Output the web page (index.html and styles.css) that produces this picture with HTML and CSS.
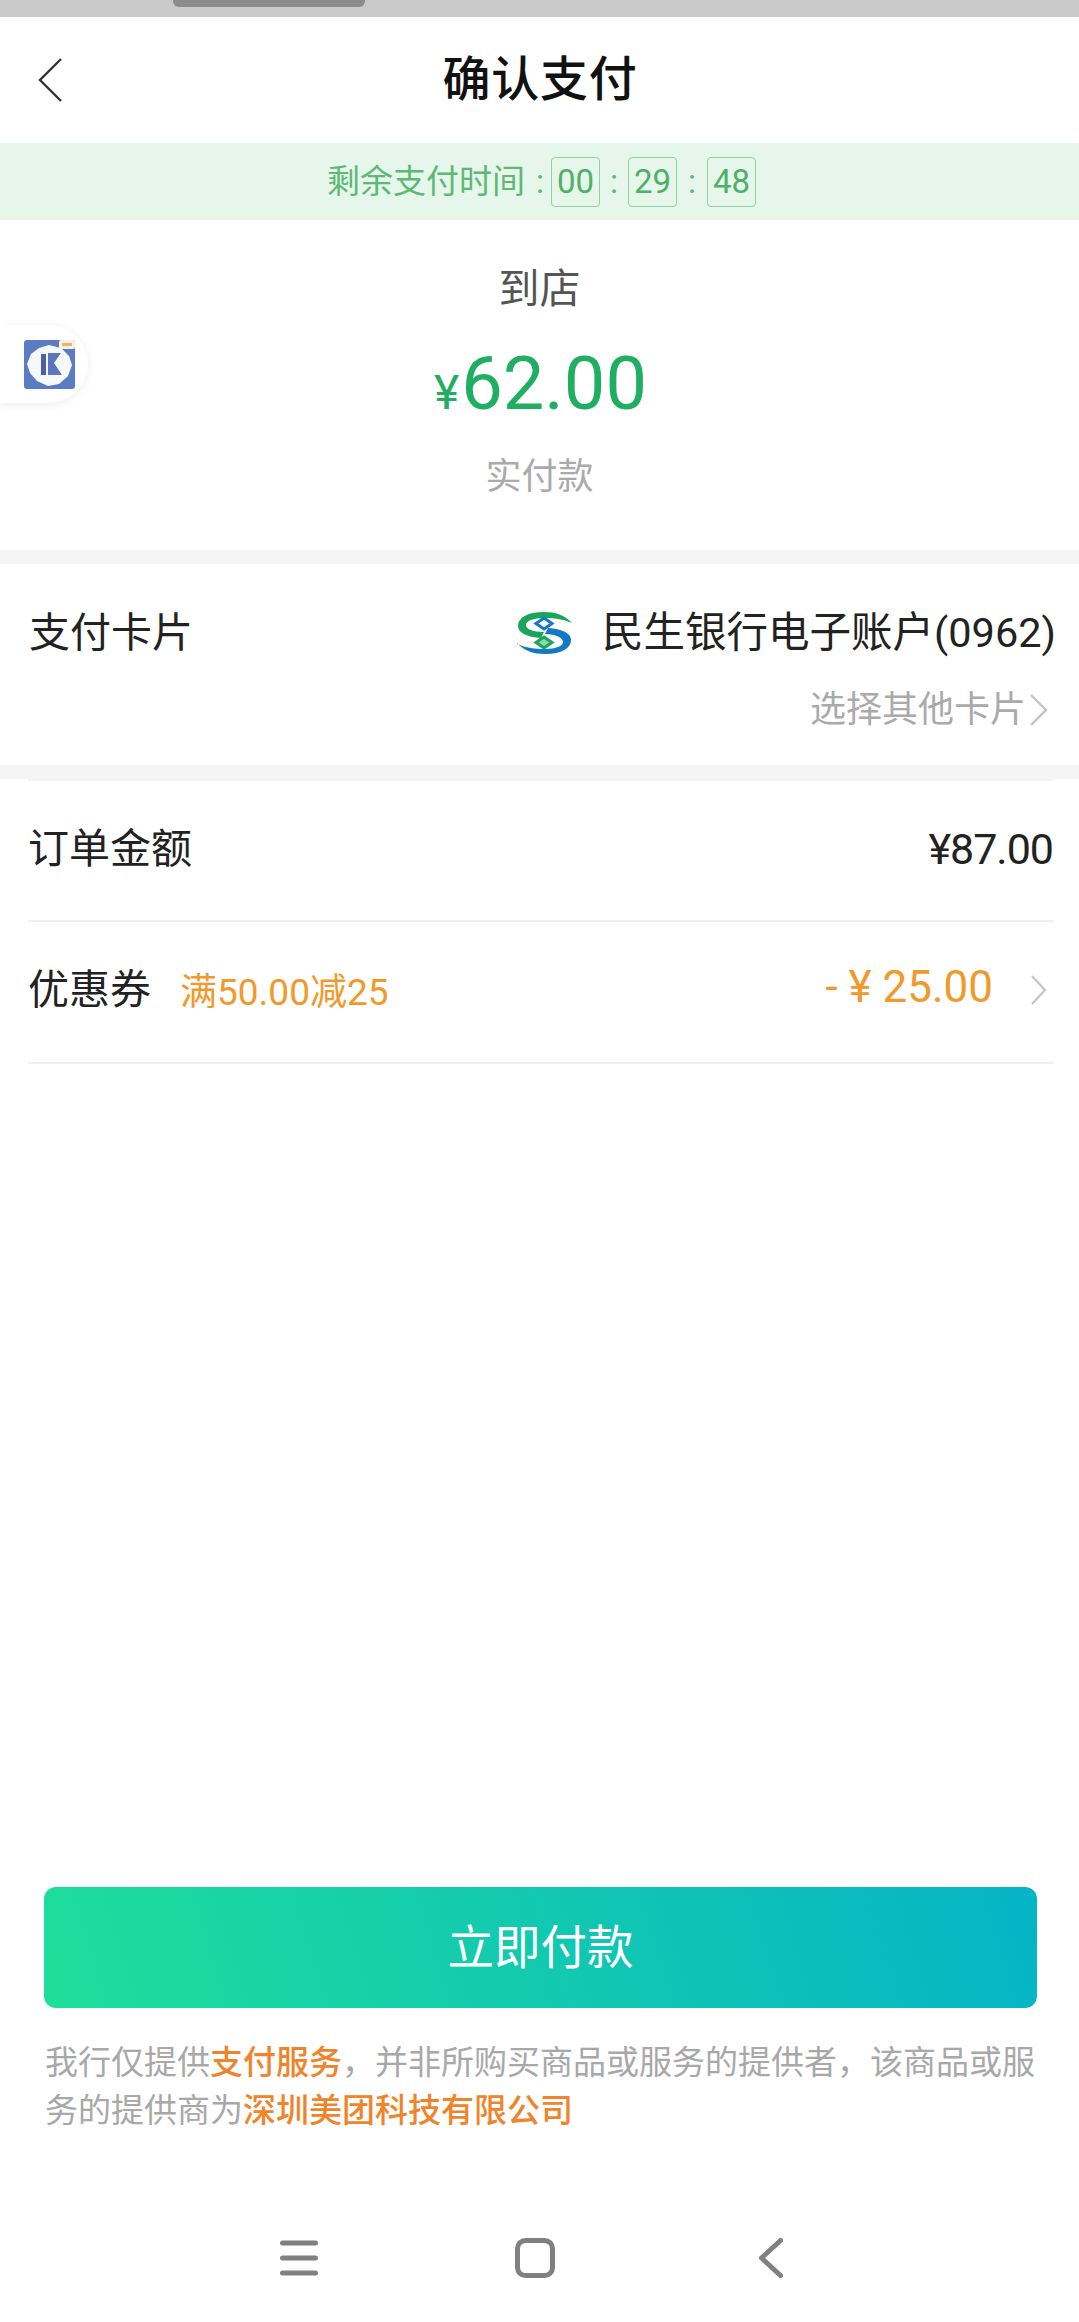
FILE: index.html
```html
<!DOCTYPE html>
<html lang="zh-CN">
<head>
<meta charset="utf-8">
<title>确认支付</title>
<link rel="stylesheet" href="styles.css">
</head>
<body>
<div class="page">
  <div class="status"><div class="status-tab"></div></div>

  <header class="nav">
    <svg class="nav-back" width="24" height="44" viewBox="0 0 24 44"><path d="M23 1 2 22l21 21" fill="none" stroke="#333" stroke-width="2.4"/></svg>
    <h1 class="nav-title">确认支付</h1>
  </header>

  <div class="timer">
    <span class="timer-label">剩余支付时间</span>
    <span class="timer-sep timer-sep-a">:</span>
    <span class="timer-box">00</span>
    <span class="timer-sep timer-sep-b">:</span>
    <span class="timer-box">29</span>
    <span class="timer-sep timer-sep-c">:</span>
    <span class="timer-box">48</span>
  </div>

  <section class="summary">
    <div class="summary-type">到店</div>
    <div class="summary-amount"><span class="summary-yen">¥</span>62.00</div>
    <div class="summary-note">实付款</div>
  </section>

  <div class="float-badge">
    <svg width="51" height="49" viewBox="0 0 51 49">
      <rect width="51" height="49" rx="3" fill="#5b7cc2"/>
      <polygon points="25,5 37,8 45,16 48,25 44,36 35,44 24,46 13,41 6,33 3,24 7,14 15,8" fill="#fff" opacity=".95"/>
      <rect x="35" y="0" width="16" height="9" rx="2" fill="#f6f1e6"/>
      <rect x="38" y="3" width="10" height="3" fill="#eeb465"/>
      <rect x="17" y="14" width="5" height="21" fill="#4a5fa8"/>
      <polygon points="24,13 37,13 30,23 38,35 24,35" fill="#5b76bd"/>
    </svg>
  </div>

  <section class="card">
    <div class="card-row">
      <span class="label">支付卡片</span>
      <span class="card-bank">
        <svg class="bank-logo" width="55" height="42" viewBox="0 0 55 42">
          <path d="M55 11C48 3 38 0 27 0 10 0 1 6 1 14c0 7 9 11 23 12l3-6C15 20 9 17 9 13c0-4 7-7 18-7 10 0 19 1 28 5Z" fill="#19a65b"/>
          <path d="M0 31c7 8 17 11 28 11 17 0 26-6 26-14 0-7-9-11-23-12l-3 6c11 0 18 4 18 8 0 4-7 7-18 7-10 0-19-1-28-5Z" fill="#1279c4"/>
          <polygon points="27,6 35,11.5 27,17 19,11.5" fill="#fff" stroke="#1279c4" stroke-width="3"/>
          <polygon points="27,25 35,30.5 27,36 19,30.5" fill="#8fd6ae" stroke="#19a65b" stroke-width="3"/>
        </svg>
        民生银行电子账户(0962)
      </span>
    </div>
    <div class="card-other">
      选择其他卡片
      <svg width="18" height="32" viewBox="0 0 18 32"><path d="M1 1l15 15L1 31" fill="none" stroke="#c4c4c4" stroke-width="2.4"/></svg>
    </div>
  </section>

  <section class="detail">
    <div class="detail-row">
      <span class="label">订单金额</span>
      <span class="detail-price">¥87.00</span>
    </div>
    <div class="detail-row">
      <span class="label">优惠券</span>
      <span class="detail-coupon">满50.00减25</span>
      <span class="detail-discount">- ¥ 25.00</span>
      <svg class="detail-arrow" width="16" height="30" viewBox="0 0 16 30"><path d="M1 1l13 14L1 29" fill="none" stroke="#c4c4c4" stroke-width="2.2"/></svg>
    </div>
  </section>

  <div class="grow"></div>

  <button class="pay">立即付款</button>
  <p class="notice">我行仅提供<b class="hl">支付服务</b>，并非所购买商品或服务的提供者，该商品或服务的提供商为<b class="hl">深圳美团科技有限公司</b></p>

  <footer class="sysnav">
    <svg class="sys-menu" width="38" height="36" viewBox="0 0 38 36"><path d="M2.5 3h33M2.5 18h33M2.5 33h33" stroke="#808080" stroke-width="5" stroke-linecap="round"/></svg>
    <svg class="sys-home" width="40" height="40" viewBox="0 0 40 40"><rect x="2.5" y="2.5" width="35" height="35" rx="8" fill="none" stroke="#808080" stroke-width="5"/></svg>
    <svg class="sys-back" width="24" height="40" viewBox="0 0 24 40"><path d="M21.5 2.5 2.5 20l19 17.5" fill="none" stroke="#808080" stroke-width="5" stroke-linecap="round" stroke-linejoin="round"/></svg>
  </footer>
</div>
</body>
</html>
```
FILE: styles.css
```css
* { box-sizing: border-box; }
html, body { margin: 0; padding: 0; background: #fff; }
body { font-family: Roboto, "Noto Sans CJK SC", sans-serif; color: #222; }

.page {
  position: relative;
  display: flex;
  flex-direction: column;
  width: 1079px;
  height: 2322px;
  overflow: hidden;
  background: #fff;
}

.status { height: 17px; flex: none; background: #c9c9c9; }
.status-tab {
  width: 192px;
  height: 7px;
  margin-left: 173px;
  background: #8c8c8c;
  border-radius: 0 0 6px 6px;
}

.nav {
  position: relative;
  flex: none;
  height: 126px;
  display: flex;
  align-items: center;
  justify-content: center;
}
.nav-back { position: absolute; left: 38px; top: 41px; }
.nav-title { margin: 0; padding-left: 1px; font-size: 48px; line-height: 60px; font-weight: 500; letter-spacing: .8px; color: #111; }

.timer {
  flex: none;
  height: 77px;
  display: flex;
  align-items: center;
  justify-content: center;
  padding-left: 4px;
  background: #e6f6ea;
  color: #5db974;
  font-size: 33px;
}
.timer-label { line-height: 50px; }
.timer-sep { text-align: center; line-height: 50px; }
.timer-sep-a { width: 26px; padding-left: 4px; }
.timer-sep-b { width: 28px; }
.timer-sep-c { width: 30px; }
.timer-box {
  width: 49px;
  height: 50px;
  line-height: 48px;
  text-align: center;
  border: 1px solid #8fd3a2;
  border-radius: 4px;
  color: #4fb068;
}

.summary {
  flex: none;
  height: 330px;
  padding-top: 48px;
  display: flex;
  flex-direction: column;
  align-items: center;
}
.summary-type { font-size: 41px; line-height: 42px; color: #555; }
.summary-amount {
  margin-top: 32px;
  padding-left: 2px;
  font-size: 74px;
  line-height: 84px;
  color: #1fae62;
}
.summary-yen { font-size: 48px; margin-right: 2px; }
.summary-note { margin-top: 22px; font-size: 36px; line-height: 40px; color: #aaa; }

.float-badge {
  position: absolute;
  left: 0;
  top: 325px;
  width: 88px;
  height: 78px;
  display: flex;
  align-items: center;
  padding-left: 24px;
  background: #fff;
  border-radius: 0 39px 39px 0;
  box-shadow: 0 2px 10px rgba(0, 0, 0, .07);
}

.card {
  flex: none;
  height: 229px;
  padding: 48px 23px 0 29px;
  background: #fff;
  border-top: 14px solid #f5f5f5;
  border-bottom: 14px solid #f5f5f5;
}
.card-row { display: flex; justify-content: space-between; align-items: center; height: 42px; }
.label { font-size: 41px; line-height: 42px; color: #222; }
.card-bank { display: flex; align-items: center; font-size: 41.5px; line-height: 42px; color: #222; }
.bank-logo { margin-right: 30px; }
.card-other {
  margin-top: 36px;
  display: flex;
  justify-content: flex-end;
  align-items: center;
  gap: 4px;
  padding-right: 8px;
  font-size: 36px;
  line-height: 40px;
  color: #aaa;
}

.detail { flex: none; margin: 0 26px 0 28px; border-top: 2px solid #f3f3f3; }
.detail-row {
  display: flex;
  align-items: center;
  height: 142px;
  padding-bottom: 4px;
  border-bottom: 2px solid #f0f0f0;
}
.detail-row:first-child { height: 141px; }
.detail-price { margin-left: auto; font-size: 43px; letter-spacing: -1px; color: #222; }
.detail-coupon { position: relative; top: -1px; margin-left: 29px; font-size: 37px; color: #f09a2b; }
.detail-discount { position: relative; top: -3px; margin-left: auto; font-size: 44px; color: #f09a2b; white-space: pre; }
.detail-arrow { margin-left: 38px; margin-right: 6px; }

.grow { flex: 1; }

.pay {
  flex: none;
  display: block;
  width: 993px;
  height: 121px;
  margin: 0 0 0 44px;
  padding: 0 0 8px;
  border: 0;
  border-radius: 12px;
  background: linear-gradient(72deg, #1fde9a 0%, #05b4c6 100%);
  color: #fff;
  font-family: inherit;
  font-size: 46.5px;
}

.notice {
  flex: none;
  margin: 31px 44px 0 45px;
  font-size: 33px;
  line-height: 48px;
  color: #a8a8a8;
}
.hl { font-weight: 500; color: #f0842a; }

.sysnav {
  flex: none;
  height: 187px;
  padding: 103px 0 0 280px;
  display: flex;
  align-items: flex-start;
}
.sys-menu { margin-top: 2px; }
.sys-home { margin-left: 197px; }
.sys-back { margin-left: 204px; }
```
